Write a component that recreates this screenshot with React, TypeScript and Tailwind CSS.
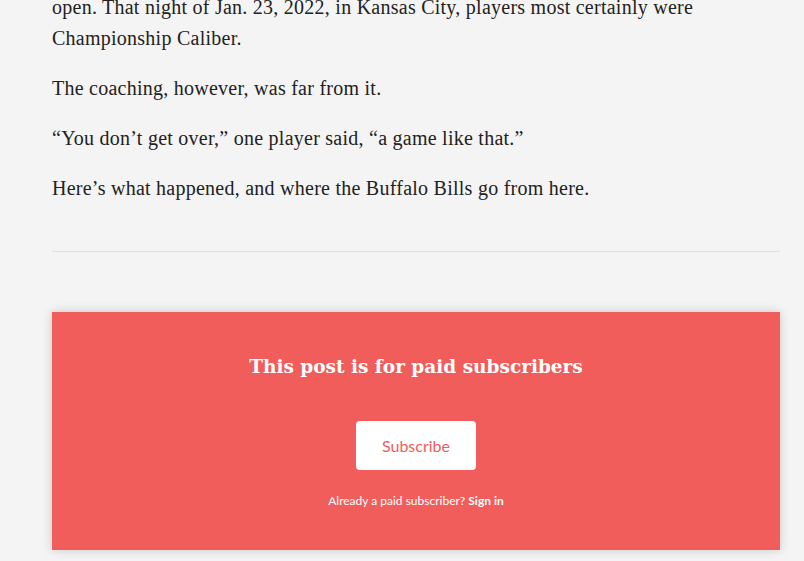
const paragraphs = [
  "open. That night of Jan. 23, 2022, in Kansas City, players most certainly were Championship Caliber.",
  "The coaching, however, was far from it.",
  "\u201cYou don\u2019t get over,\u201d one player said, \u201ca game like that.\u201d",
  "Here\u2019s what happened, and where the Buffalo Bills go from here.",
];

const App = () => {
  return (
    <div className="min-h-[561px] w-[804px] overflow-hidden bg-[#f4f4f4]">
      <div className="ml-[52px] w-[728px]">
        {/* Article tail */}
        <div className="-mt-[8px] flex flex-col gap-[19px] font-['Liberation_Serif',serif] text-[20px] leading-[31px] tracking-[0.25px] text-[#222]">
          {paragraphs.map((p) => (
            <p key={p} className="pr-[60px]">{p}</p>
          ))}
        </div>

        <div className="mt-[47px] h-px bg-[#dedede]" />

        {/* Paywall */}
        <div className="mt-[60px] flex h-[238px] flex-col items-center bg-[#f05d5b] shadow-[0_0_10px_rgba(0,0,0,0.18)]">
          <h2 className="mt-[40px] font-['DejaVu_Serif',serif] text-[18.5px] font-bold leading-[30px] text-white">
            This post is for paid subscribers
          </h2>
          <button className="mt-[39px] h-[49px] w-[120px] rounded-[4px] bg-white font-['Lato',sans-serif] text-[16px] text-[#f05d5b]">
            Subscribe
          </button>
          <p className="mt-[22px] font-['Lato',sans-serif] text-[12px] text-white">
            Already a paid subscriber? <span className="font-bold">Sign in</span>
          </p>
        </div>
      </div>
    </div>
  );
};

export default App;
